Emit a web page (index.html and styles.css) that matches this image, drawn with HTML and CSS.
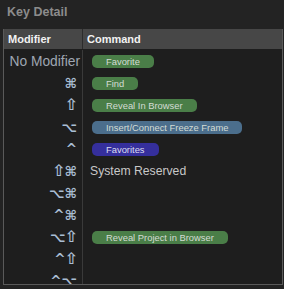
FILE: index.html
```html
<!DOCTYPE html>
<html>
<head>
  <title>Key Detail</title>
  <link rel="stylesheet" href="styles.css">
</head>
<body>
  <div class="panel">
    <h1 class="title">Key Detail</h1>
    <div class="table">
      <div class="head">
        <div class="col-mod">Modifier</div>
        <div class="col-cmd">Command</div>
      </div>
      <div class="rows">
        <div class="row">
          <div class="mod mod-text">No Modifier</div>
          <div class="cmd"><span class="pill green">Favorite</span></div>
        </div>
        <div class="row">
          <div class="mod">&#8984;</div>
          <div class="cmd"><span class="pill green">Find</span></div>
        </div>
        <div class="row">
          <div class="mod"><span class="shift">&#8679;</span></div>
          <div class="cmd"><span class="pill green">Reveal In Browser</span></div>
        </div>
        <div class="row">
          <div class="mod">&#8997;</div>
          <div class="cmd"><span class="pill blue">Insert/Connect Freeze Frame</span></div>
        </div>
        <div class="row">
          <div class="mod">^</div>
          <div class="cmd"><span class="pill purple">Favorites</span></div>
        </div>
        <div class="row">
          <div class="mod"><span class="shift">&#8679;</span>&#8984;</div>
          <div class="cmd"><span class="reserved">System Reserved</span></div>
        </div>
        <div class="row">
          <div class="mod">&#8997;&#8984;</div>
          <div class="cmd"></div>
        </div>
        <div class="row">
          <div class="mod">^&#8984;</div>
          <div class="cmd"></div>
        </div>
        <div class="row">
          <div class="mod">&#8997;<span class="shift">&#8679;</span></div>
          <div class="cmd"><span class="pill green">Reveal Project in Browser</span></div>
        </div>
        <div class="row">
          <div class="mod">^<span class="shift">&#8679;</span></div>
          <div class="cmd"></div>
        </div>
        <div class="row">
          <div class="mod">^&#8997;</div>
          <div class="cmd"></div>
        </div>
      </div>
    </div>
  </div>
</body>
</html>
```

FILE: styles.css
```css
/* Key Detail panel */

body {
  margin: 0;
  padding: 0;
  background-color: #232323;
  font-family: "Liberation Sans", Arial, sans-serif;
}

.panel {
  width: 284px;
  height: 289px;
  overflow: hidden;
}

.title {
  margin: 0;
  height: 29px;
  padding-left: 7px;
  font-size: 12.5px;
  font-weight: bold;
  line-height: 25px;
  color: #8c8c8c;
}

.table {
  margin-left: 3px;
  width: 278px;
  height: 255px;
  border: 1px solid #5a5a5a;
  border-top: none;
  background-color: #1e1e1e;
  overflow: hidden;
}

.head {
  display: grid;
  grid-template-columns: 79px 1fr;
  height: 20px;
  background-color: #474747;
  color: #f2f2f2;
  font-size: 11px;
  font-weight: bold;
  line-height: 20px;
}

.col-mod {
  padding-left: 4px;
  border-right: 1px solid #2c2c2c;
}

.col-cmd {
  padding-left: 4px;
}

.rows {
  padding-top: 1px;
}

.row {
  display: grid;
  grid-template-columns: 79px 1fr;
  height: 22px;
}

.mod {
  display: flex;
  align-items: center;
  justify-content: flex-end;
  padding-right: 5px;
  border-right: 1px solid #3a3a3a;
  font-family: "DejaVu Sans", sans-serif;
  font-size: 13.5px;
  font-weight: bold;
  color: #a9bdd3;
}

.shift {
  margin: 0 -1px;
  font-size: 16px;
  line-height: 14px;
}

.mod-text {
  padding-right: 2px;
  font-family: "Liberation Sans", Arial, sans-serif;
  font-size: 13.8px;
  font-weight: normal;
  color: #9ea6b2;
}

.cmd {
  display: flex;
  align-items: center;
  padding-left: 9px;
}

.pill {
  height: 13px;
  padding: 0 14px;
  border-radius: 5px;
  font-size: 9.4px;
  line-height: 13px;
  color: #d4dcd4;
}

.green {
  background-color: #4a7e48;
}

.blue {
  background-color: #4b6e8c;
}

.purple {
  background-color: #352f9c;
  color: #dcdcf0;
}

.reserved {
  margin-left: -2px;
  font-size: 12.2px;
  color: #c8c8c8;
}
```
